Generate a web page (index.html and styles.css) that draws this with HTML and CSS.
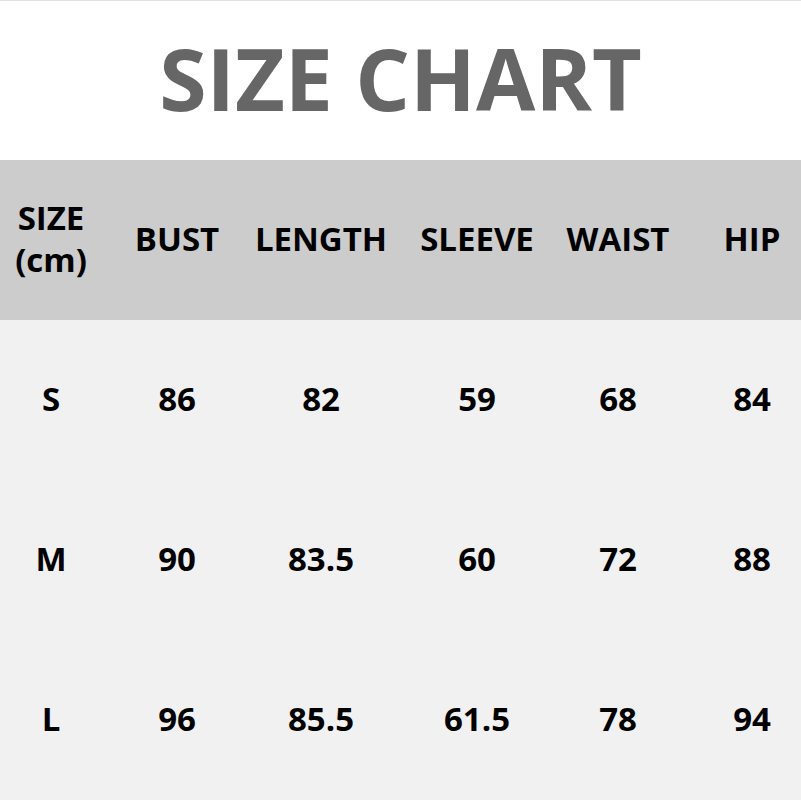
FILE: index.html
```html
<!DOCTYPE html>
<html>
<head>
<meta charset="utf-8">
<link rel="stylesheet" href="styles.css">
</head>
<body>
<div class="page">
  <div class="title-band"><h1 class="title">SIZE CHART</h1></div>
  <div class="row head">
    <div class="cell two"><span>SIZE</span><span>(cm)</span></div>
    <div class="cell">BUST</div>
    <div class="cell">LENGTH</div>
    <div class="cell">SLEEVE</div>
    <div class="cell">WAIST</div>
    <div class="cell">HIP</div>
  </div>
  <div class="row body">
    <div class="cell">S</div><div class="cell">86</div><div class="cell">82</div><div class="cell">59</div><div class="cell">68</div><div class="cell">84</div>
  </div>
  <div class="row body">
    <div class="cell">M</div><div class="cell">90</div><div class="cell">83.5</div><div class="cell">60</div><div class="cell">72</div><div class="cell">88</div>
  </div>
  <div class="row body">
    <div class="cell">L</div><div class="cell">96</div><div class="cell">85.5</div><div class="cell">61.5</div><div class="cell">78</div><div class="cell">94</div>
  </div>
</div>
</body>
</html>
```
FILE: styles.css
```css
html, body { margin: 0; padding: 0; background: #ffffff; }
body { width: 801px; height: 801px; overflow: hidden; font-family: "Open Sans", "Noto Sans", sans-serif; }
.page { width: 801px; height: 801px; overflow: hidden; border-top: 1px solid #e2e2e2; box-sizing: border-box; }
.title-band { height: 159px; display: flex; align-items: center; justify-content: center; background: #fff; padding-bottom: 6px; box-sizing: border-box; }
.title { margin: 0; font-size: 86px; font-weight: 700; color: #666666; line-height: 1; letter-spacing: 0; }
.row { display: grid; grid-template-columns: 102px 150px 138px 174px 108px 160px; height: 160px; width: 832px; }
.head { background: #cccccc; }
.body { background: #f1f1f1; }
.cell { display: flex; align-items: center; justify-content: center; font-size: 33px; font-weight: 700; color: #000; white-space: nowrap; padding-bottom: 3px; box-sizing: border-box; }
.two { flex-direction: column; line-height: 42px; }
```
